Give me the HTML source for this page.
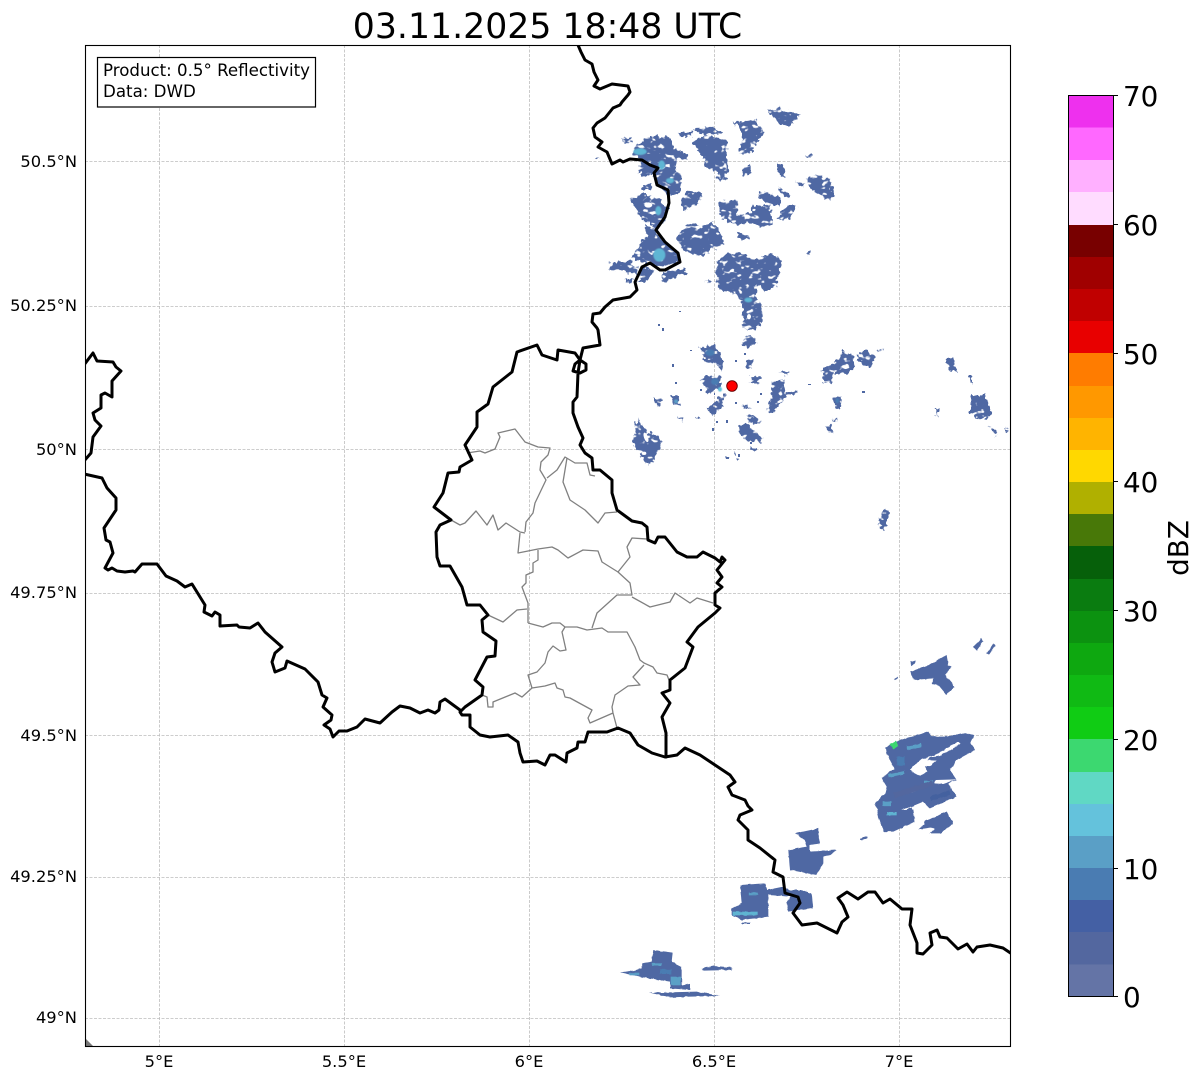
<!DOCTYPE html>
<html><head><meta charset="utf-8"><style>
html,body{margin:0;padding:0;background:#fff}
svg{display:block}
text{font-family:"DejaVu Sans",sans-serif;fill:#000}
</style></head><body>
<svg width="1202" height="1081" viewBox="0 0 1202 1081" xmlns="http://www.w3.org/2000/svg">
<defs>
<filter id="r" x="-10%" y="-10%" width="120%" height="120%" color-interpolation-filters="sRGB">
<feTurbulence type="fractalNoise" baseFrequency="0.22" numOctaves="2" seed="4" result="n"/>
<feDisplacementMap in="SourceGraphic" in2="n" scale="7" xChannelSelector="R" yChannelSelector="G" result="d"/>
<feTurbulence type="fractalNoise" baseFrequency="0.14 0.2" numOctaves="2" seed="11"/>
<feColorMatrix type="matrix" values="0 0 0 0 0  0 0 0 0 0  0 0 0 0 0  9 0 0 0 -2.5" result="m"/>
<feComposite in="d" in2="m" operator="in"/>
</filter>
<filter id="b" x="-10%" y="-10%" width="120%" height="120%" color-interpolation-filters="sRGB">
<feTurbulence type="fractalNoise" baseFrequency="0.25" numOctaves="1" seed="7" result="n"/>
<feDisplacementMap in="SourceGraphic" in2="n" scale="2.500" xChannelSelector="R" yChannelSelector="G"/>
</filter>
<filter id="s" x="-20%" y="-20%" width="140%" height="140%"><feGaussianBlur stdDeviation="1.2"/></filter>
<clipPath id="ax"><rect x="85" y="45" width="925" height="1002"/></clipPath>
</defs>
<rect width="1202" height="1081" fill="#fff"/>
<text x="547.5" y="38" font-size="34.7" text-anchor="middle">03.11.2025 18:48 UTC</text>

<g stroke="#bdbdbd" stroke-width="0.8" stroke-dasharray="3 1.5" fill="none">
<path d="M159.500 45V1047M344.500 45V1047M529.500 45V1047M714.500 45V1047M899.500 45V1047"/>
<path d="M85 161.500H1010M85 306.500H1010M85 449.500H1010M85 593.500H1010M85 735.500H1010M85 877.500H1010M85 1018.500H1010"/>
</g>

<g clip-path="url(#ax)">
<g fill="#4f68a3" filter="url(#r)">
<g transform="translate(580 90) scale(.33333)">
<polygon points="160,175 190,150 215,140 270,140 280,175 320,190 322,210 290,205 285,240 305,260 300,310 265,318 230,275 220,250 185,262 175,225 185,210 155,190"/>
<polygon points="125,145 155,145 150,160 130,158"/>
<polygon points="45,205 58,205 52,213"/>
<polygon points="150,330 185,312 240,325 250,350 265,350 250,400 225,420 210,395 190,395 175,365"/>
<polygon points="195,400 225,420 255,455 295,490 300,515 250,530 200,520 165,510 160,500 185,450 200,440"/>
<polygon points="190,285 215,280 210,300 185,300"/>
<polygon points="85,520 145,512 175,535 170,552 125,545 90,535"/>
<polygon points="185,530 225,540 200,575 175,578"/>
<polygon points="130,565 160,570 155,578 135,575"/>
<polygon points="250,545 315,535 318,552 270,565 255,582 245,570"/>
<polygon points="300,335 320,305 365,310 355,340 310,360"/>
<polygon points="295,130 335,125 335,138 300,140"/>
<polygon points="335,115 400,110 430,130 375,135"/>
<polygon points="340,155 375,135 440,150 440,210 445,240 435,270 410,268 415,245 375,235 372,200 350,180"/>
<polygon points="460,97 525,90 550,125 535,155 510,190 480,190 480,170 490,130"/>
<polygon points="560,60 600,55 660,75 635,105 600,100"/>
<polygon points="490,235 510,225 512,250 492,260"/>
<polygon points="590,215 610,230 615,262 600,260"/>
<polygon points="645,275 675,285 660,290"/>
<polygon points="675,262 715,255 750,270 760,320 745,330 690,295"/>
<polygon points="295,430 330,400 365,410 395,395 420,420 430,455 420,475 390,475 390,490 350,498 310,480 290,445"/>
<polygon points="420,335 470,330 470,375 510,370 520,345 570,345 578,400 550,410 500,400 470,405 440,395 415,375"/>
<polygon points="540,305 600,320 600,345 555,340 535,315"/>
<polygon points="470,430 505,435 505,448 475,445"/>
<polygon points="410,520 440,490 490,490 520,510 580,490 605,510 595,560 590,590 555,605 540,590 530,580 525,620 545,650 545,690 525,720 490,715 490,650 470,610 420,600 410,580"/>
<polygon points="600,370 625,345 650,350 630,385 590,385"/>
<polygon points="595,295 630,315 625,322 595,305"/>
<polygon points="680,195 695,195 695,202 680,202"/>
<polygon points="370,570 390,565 395,580 380,585"/>
<polygon points="680,488 690,488 688,497"/>
</g>
<g transform="translate(620 330) scale(.33333)">
<polygon points="240,50 280,45 300,75 310,100 305,125 290,100 255,95"/>
<polygon points="240,150 260,135 300,140 300,175 265,190 255,170"/>
<polygon points="295,200 320,195 300,235 275,260 265,235"/>
<polygon points="365,40 385,10 412,35 385,55"/>
<polygon points="380,90 400,85 395,115 378,112"/>
<polygon points="392,140 420,140 410,165 390,160"/>
<polygon points="95,198 130,210 115,230"/>
<polygon points="155,200 175,195 180,225 160,225"/>
<polygon points="168,255 190,265 190,278"/>
<polygon points="50,265 75,300 120,320 125,350 100,395 80,405 55,370 40,340"/>
<polygon points="225,262 240,255 240,268"/>
<polygon points="455,155 490,150 495,190 535,180 535,192 500,195 465,240 450,255 440,240 455,200"/>
<polygon points="475,125 505,125 495,140"/>
<polygon points="370,225 395,235 370,235"/>
<polygon points="380,255 425,270 410,285 390,280"/>
<polygon points="355,285 380,280 430,325 425,335 385,335 355,305"/>
<polygon points="395,350 410,355 405,365 392,358"/>
<polygon points="605,120 650,95 670,60 700,80 705,110 680,130 640,130 635,160 610,160"/>
<polygon points="710,75 745,60 765,90 750,110 725,105"/>
<polygon points="640,200 665,205 660,240 645,235"/>
<polygon points="610,290 635,290 635,312"/>
<polygon points="640,265 650,265 648,275"/>
<polygon points="310,380 330,380 320,388"/>
<polygon points="340,365 358,385 350,388"/>
<polygon points="770,60 790,55 780,65"/>
</g>
<polygon points="945,360 952,356 958,372 950,372"/>
<polygon points="970,395 985,395 992,415 980,420 970,412"/>
<polygon points="968,375 972,375 972,385"/>
<polygon points="988,425 998,432 996,436"/>
<polygon points="1005,427 1010,430 1006,432"/>
<polygon points="935,408 938,408 937,416"/>
<polygon points="878,525 884,508 890,512 884,530"/>
<polygon points="825,428 831,425 832,433"/>
<polygon points="837,398 842,395 841,407 835,405"/>
</g>
<g fill="#4f68a3" filter="url(#b)">
<g transform="translate(850 620) scale(.33333)">
<polygon points="105,385 135,365 235,335 245,350 290,350 345,338 372,345 360,370 375,390 320,420 300,450 320,480 295,490 320,530 240,565 220,545 185,560 190,605 130,630 100,620 90,590 75,550 105,520 110,500 95,475 125,450 135,450 115,410"/>
<polygon points="222,605 290,575 305,610 270,640 255,625 225,620"/>
<polygon points="180,155 235,135 290,105 295,135 305,140 285,165 315,200 290,225 265,195 245,190 250,175 190,180"/>
<polygon points="180,125 195,120 195,130 185,137"/>
<polygon points="370,80 395,55 400,65 380,92"/>
<polygon points="410,100 430,70 435,78 418,103"/>
<polygon points="130,178 145,170 145,175 135,180"/>
<polygon points="30,655 52,650 50,655 30,660"/>
<polygon fill="#fff" points="178,450 215,418 255,405 325,365 332,372 270,408 240,412 222,432 232,455 212,468"/>
<polygon fill="#fff" points="220,420 260,422 238,440 218,438"/>
<polygon fill="#fff" points="180,512 240,488 218,505 185,518"/>
<polygon fill="#fff" points="150,572 210,550 185,562 150,580"/>
<polygon fill="#fff" points="258,480 320,478 280,492 252,490"/>
<rect x="170" y="375" width="45" height="12" fill="#5a9fc6" transform="rotate(-12 190 382)"/>
<rect x="140" y="410" width="25" height="26" fill="#4a7cb2"/>
<rect x="115" y="458" width="50" height="9" fill="#5a9fc6" transform="rotate(-12 140 465)"/>
<rect x="98" y="545" width="25" height="12" fill="#5a9fc6"/>
<rect x="108" y="572" width="32" height="14" fill="#5a9fc6"/>
<rect x="222" y="482" width="25" height="8" fill="#5a9fc6"/>
<rect x="130" y="500" width="120" height="16" fill="#53679f" transform="rotate(-18 190 508)"/>
<rect x="240" y="520" width="60" height="14" fill="#44619f" transform="rotate(-18 270 527)"/>
<polygon fill="#3cd870" points="120,372 138,362 145,378 130,388"/>
</g>
<g transform="translate(720 810) scale(.33333)">
<polygon points="225,70 295,55 295,75 300,100 270,105 270,125 350,120 330,135 310,140 310,160 290,195 210,180 205,120 260,110 250,85"/>
<polygon points="470,0 580,0 585,35 520,65 490,65 480,35"/>
<polygon points="60,225 135,220 140,240 190,230 205,240 245,240 275,250 280,295 205,305 200,280 210,260 145,255 145,320 65,330 35,315 35,295 65,280"/>
<polygon points="595,58 630,30 680,5 700,40 660,70 630,70 650,50"/>
<polygon points="420,85 440,78 440,85 425,90"/>
<rect x="63" y="338" width="27" height="4"/>
<rect x="38" y="305" width="75" height="11" fill="#5fb4d2"/>
<rect x="85" y="248" width="30" height="8" fill="#5a9fc6"/>
<rect x="500" y="6" width="30" height="10" fill="#5fb4d2"/>
</g>
<g transform="translate(600 940) scale(.33333)">
<polygon points="160,30 218,38 215,65 245,80 245,135 270,130 270,150 210,145 210,125 130,112 60,97 100,92 125,85 125,70 155,65"/>
<polygon points="145,157 175,158 290,155 330,162 360,168 270,170 210,172"/>
<polygon points="305,85 340,78 395,82 395,90 310,92"/>
<rect x="212" y="110" width="30" height="26" fill="#5aa0c6"/>
<rect x="90" y="98" width="28" height="8" fill="#5a9fc6"/>
<rect x="155" y="70" width="30" height="8" fill="#5a9fc6"/>
<rect x="180" y="88" width="34" height="14" fill="#4a7cb2"/>
</g>
</g>
<g filter="url(#s)" fill="#5fb6d4" transform="translate(580 90) scale(.33333)">
<ellipse cx="180" cy="185" rx="20" ry="10"/>
<ellipse cx="245" cy="225" rx="10" ry="14"/>
<ellipse cx="270" cy="272" rx="12" ry="8"/>
<ellipse cx="235" cy="362" rx="9" ry="14"/>
<ellipse cx="238" cy="495" rx="18" ry="20"/>
<ellipse cx="505" cy="630" rx="12" ry="7"/>
</g>
<g fill="#fff" transform="translate(580 90) scale(.33333)">
<ellipse cx="205" cy="345" rx="12" ry="8"/><ellipse cx="507" cy="680" rx="6" ry="8"/>
</g>
<g filter="url(#s)" transform="translate(620 330) scale(.33333)">
<ellipse cx="270" cy="68" rx="14" ry="10" fill="#4a7cb2"/>
<ellipse cx="285" cy="155" rx="12" ry="10" fill="#4a7cb2"/>
<ellipse cx="300" cy="178" rx="6" ry="7" fill="#64c2dc"/>
<ellipse cx="168" cy="214" rx="6" ry="6" fill="#5a9fc6"/>
<ellipse cx="652" cy="212" rx="6" ry="8" fill="#4a7cb2"/>
</g>
<g fill="#fff" transform="translate(620 330) scale(.33333)">
<ellipse cx="78" cy="322" rx="6" ry="15" transform="rotate(-20 78 322)"/>
<ellipse cx="72" cy="370" rx="7" ry="5"/>
</g>
<g fill="#4f68a3">
<rect x="658" y="324" width="2" height="2"/><rect x="662" y="328" width="2" height="3"/><rect x="679" y="311" width="2" height="1"/><rect x="672" y="364" width="2" height="3"/><rect x="675" y="382" width="2" height="2"/><rect x="712" y="428" width="2" height="3"/><rect x="716" y="421" width="2" height="2"/><rect x="726" y="420" width="2" height="3"/><rect x="735" y="402" width="2" height="2"/><rect x="757" y="401" width="2" height="2"/><rect x="752" y="378" width="3" height="2"/><rect x="760" y="393" width="2" height="2"/><rect x="735" y="360" width="2" height="2"/><rect x="744" y="353" width="2" height="2"/><rect x="808" y="384" width="3" height="1"/><rect x="862" y="391" width="3" height="2"/><rect x="700" y="389" width="2" height="2"/><rect x="714" y="393" width="1" height="2"/><rect x="750" y="442" width="2" height="2"/><rect x="738" y="454" width="2" height="3"/><rect x="726" y="457" width="3" height="2"/><rect x="690" y="350" width="2" height="1"/>
</g>

<!-- grey boundaries -->
<g fill="none" stroke="#808080" stroke-width="1.3" stroke-linejoin="round">
<path d="M467 453L480 451L485 453L495 449L500 437L498 433L515 429L525 442L538 447L550 448L548 455L541 462L540 470L546 480L535 503L533 513L526 522L525 532"/>
<path d="M451 520L460 525L465 523L476 511L487 525L493 515L498 530L506 523L520 532L525 533"/>
<path d="M520 533L518 553L538 549L552 547L558 550L568 558L583 550L598 551L602 562L618 572L630 557L627 547L632 538L647 539"/>
<path d="M547 478L557 470L565 457L575 463L587 463L590 475L595 476"/>
<path d="M567 458L563 482L570 500L585 510L598 523L605 513L617 512"/>
<path d="M538 550L538 560L533 563L533 572L526 575L526 583L522 587L528 603L528 623"/>
<path d="M618 572L630 583L632 595L617 595L597 613L592 628"/>
<path d="M632 597L650 607L670 602L675 593L690 603L697 598L713 603"/>
<path d="M488 615L503 622L517 610L527 609"/>
<path d="M528 623L543 627L552 623L560 623L565 627L577 627L587 630L602 628L608 632L627 632L635 647L640 660L644 663L653 667L657 673L667 675L669 680"/>
<path d="M565 627L562 632L566 650L560 651L553 646L548 652L545 663L537 672L528 675L532 688"/>
<path d="M644 665L633 677L640 685L628 686L615 695L612 707L613 713L617 728"/>
<path d="M613 713L590 723L588 718L592 710L570 698L565 697L563 690L557 688L555 683L545 686L532 688L522 697L515 693L493 702L493 707L488 707L487 697L482 695"/>
</g>

<!-- black borders -->
<g fill="none" stroke="#000" stroke-width="3" stroke-linejoin="round" stroke-linecap="round">
<path d="M578 45L581 52L585 60L592 64L594 72L598 80L594 86L600 89L612 84L628 86L630 92L628 95L622 102L620 105L613 108L605 118L597 123L593 128L595 137L602 142L598 147L607 152L612 164L620 160L623 162L630 159L642 160L650 165L658 168L654 173L657 185L668 190L669 203L665 217L656 230L665 242L678 253L680 262L665 270L660 270L650 263L642 267L635 282L637 290L630 297L613 300L605 307L600 313L593 314L592 322L597 328L598 330L600 345L583 348L580 360L575 364L573 371L580 373L586 370L586 364L580 360L578 373L577 397L573 402L573 413L578 427L583 438L580 445L585 453L592 458L593 470L600 470L612 480L612 493L617 510L632 521L642 523L647 527L648 540L655 543L658 537L665 537L677 552L687 557L697 557L703 552L715 558L720 562L722 557L725 560L717 570L722 577L717 583L722 587L715 593L715 605L720 608L715 613L698 627L687 642L693 647L685 668L670 680L670 690L662 693L670 703L662 717L666 733L666 757"/>
<path d="M580 360L575 353L558 350L557 360L542 355L537 345L517 352L512 372L493 387L488 404L477 412L477 427L465 445L472 460L460 467L459 472L448 473L443 493L434 507L451 520L440 525L436 532L437 557L440 566L450 566L462 587L467 605L480 605L488 615L482 620L483 632L496 641L495 656L487 657L475 680L483 687L482 695L465 707L460 712L462 715L470 715L470 727L480 735L490 737L508 735L518 742L520 753L523 762L537 761L545 765L550 755L555 755L566 762L567 753L577 748L578 742L585 742L588 732L607 732L618 728L630 733L638 745L652 753L665 757L677 755L685 748L700 755L712 763L730 775L735 782L728 787L732 795L745 800L748 806L752 810L740 815L738 820L748 830L748 840L760 848L775 860L773 872L783 877L785 893L798 897L800 903L793 913L802 925L817 923L837 933L842 922L848 917L843 905L838 898L847 892L858 899L868 892L875 892L883 903L890 899L902 909L912 909L910 925L917 943L917 953L923 954L932 945L930 933L937 930L940 937L947 938L958 949L967 944L973 952L977 947L990 945L1003 948L1012 954"/>
<path d="M460 710L445 699L440 702L439 710L435 713L428 710L420 713L410 708L400 706L392 712L380 723L365 719L357 727L347 731L339 731L333 737L330 729L324 725L331 720L332 715L323 707L327 698L322 695L318 682L305 669L287 661L285 668L275 672L272 662L275 653L282 647L265 632L258 623L250 628L239 627L237 625L220 626L220 615L215 612L212 616L204 612L205 605L192 584L185 587L177 581L166 576L157 564L142 564L135 572L133 571L125 572L117 571L112 568L108 570L105 568L113 553L110 542L106 540L104 528L106 525L116 510L116 498L107 488L102 478L84 474"/>
<path d="M84 365L93 353L97 361L113 362L116 367L121 371L112 381L112 397L105 393L101 395L101 408L93 413L95 420L101 426L93 437L91 453L84 461"/>
</g>
<polygon points="85,1038 94,1047 85,1047" fill="#777"/>
<circle cx="732" cy="386" r="5.3" fill="#f00" stroke="#600" stroke-width="0.9"/>
</g>

<rect x="85.500" y="45.500" width="925" height="1001" fill="none" stroke="#000" stroke-width="1.1"/>

<rect x="97.500" y="57.500" width="218" height="49.500" fill="#fff" stroke="#000" stroke-width="1.2"/>
<text x="103" y="76" font-size="16.670" textLength="207" lengthAdjust="spacingAndGlyphs">Product: 0.5° Reflectivity</text>
<text x="103" y="97" font-size="16.670">Data: DWD</text>

<g font-size="16.300" text-anchor="end">
<text x="77" y="167">50.5°N</text>
<text x="77" y="311">50.25°N</text>
<text x="77" y="455">50°N</text>
<text x="77" y="598">49.75°N</text>
<text x="77" y="741">49.5°N</text>
<text x="77" y="882">49.25°N</text>
<text x="77" y="1023">49°N</text>
</g>
<g font-size="16.300" text-anchor="middle">
<text x="159" y="1067">5°E</text>
<text x="344" y="1067">5.5°E</text>
<text x="529" y="1067">6°E</text>
<text x="714" y="1067">6.5°E</text>
<text x="899" y="1067">7°E</text>
</g>

<!-- colorbar -->
<g shape-rendering="crispEdges">
<rect x="1068" y="964" width="45" height="32.500" fill="#6474a6"/>
<rect x="1068" y="932" width="45" height="32.500" fill="#53679f"/>
<rect x="1068" y="899" width="45" height="33" fill="#4460a4"/>
<rect x="1068" y="867" width="45" height="33" fill="#4a7cb2"/>
<rect x="1068" y="835" width="45" height="33" fill="#5a9fc6"/>
<rect x="1068" y="803" width="45" height="33" fill="#64c2dc"/>
<rect x="1068" y="771" width="45" height="33" fill="#60d8c4"/>
<rect x="1068" y="739" width="45" height="33" fill="#3cd870"/>
<rect x="1068" y="706" width="45" height="33" fill="#10cc14"/>
<rect x="1068" y="674" width="45" height="33" fill="#10ba14"/>
<rect x="1068" y="642" width="45" height="33" fill="#0ea810"/>
<rect x="1068" y="610" width="45" height="33" fill="#0c9210"/>
<rect x="1068" y="578" width="45" height="33" fill="#0a7c10"/>
<rect x="1068" y="546" width="45" height="33" fill="#06600a"/>
<rect x="1068" y="513" width="45" height="33" fill="#487808"/>
<rect x="1068" y="481" width="45" height="33" fill="#b0b000"/>
<rect x="1068" y="449" width="45" height="33" fill="#ffd800"/>
<rect x="1068" y="417" width="45" height="33" fill="#ffb400"/>
<rect x="1068" y="385" width="45" height="33" fill="#ff9800"/>
<rect x="1068" y="353" width="45" height="33" fill="#ff7c00"/>
<rect x="1068" y="320" width="45" height="33" fill="#e80000"/>
<rect x="1068" y="288" width="45" height="33" fill="#c00000"/>
<rect x="1068" y="256" width="45" height="33" fill="#a00000"/>
<rect x="1068" y="224" width="45" height="33" fill="#780000"/>
<rect x="1068" y="192" width="45" height="33" fill="#ffdcff"/>
<rect x="1068" y="159" width="45" height="33" fill="#ffb0ff"/>
<rect x="1068" y="127" width="45" height="33" fill="#ff68ff"/>
<rect x="1068" y="95" width="45" height="32.500" fill="#ee30ee"/>
</g>
<rect x="1068.500" y="95.500" width="45" height="901" fill="none" stroke="#000" stroke-width="1"/>
<path d="M1113 95.500h5M1113 224.500h5M1113 353.500h5M1113 481.500h5M1113 610.500h5M1113 739.500h5M1113 868.500h5M1113 996.500h5" stroke="#000" stroke-width="1"/>
<g font-size="27.800">
<text x="1123" y="106">70</text>
<text x="1123" y="235">60</text>
<text x="1123" y="364">50</text>
<text x="1123" y="492">40</text>
<text x="1123" y="621">30</text>
<text x="1123" y="750">20</text>
<text x="1123" y="879">10</text>
<text x="1123" y="1007">0</text>
</g>
<text transform="translate(1188 548) rotate(-90)" font-size="27.800" text-anchor="middle">dBZ</text>
</svg>
</body></html>
